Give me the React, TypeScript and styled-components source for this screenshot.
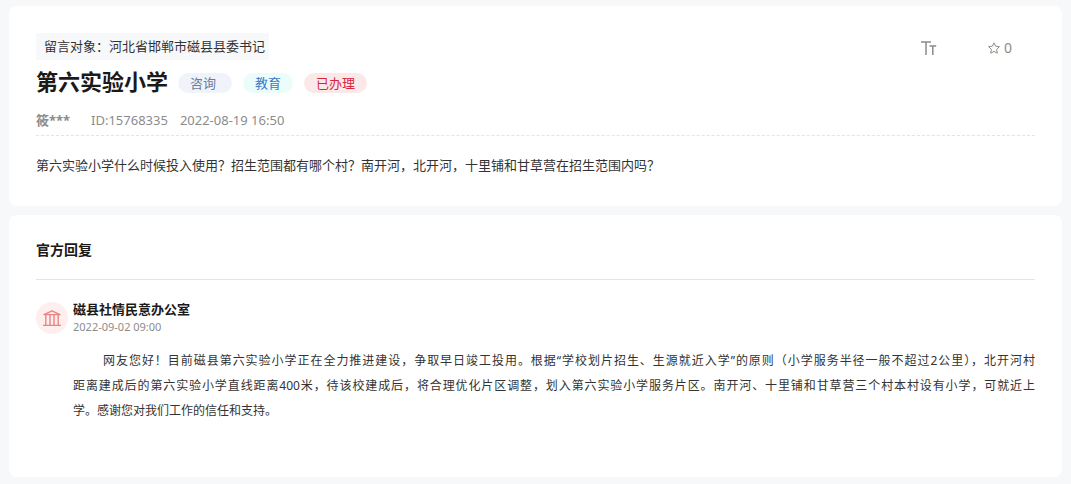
import React from "react";
import styled, { createGlobalStyle } from "styled-components";

const GlobalStyle = createGlobalStyle`
  * { box-sizing: border-box; }
  body {
    margin: 0;
    background: #f7f8fa;
    color: #333;
    font-family: "Noto Sans", "Noto Sans CJK SC", sans-serif;
    font-size: 13px;
  }
  h1, h2, h3, p { margin: 0; }
`;

const Page = styled.main`
  display: flex;
  flex-direction: column;
  gap: 9px;
  padding: 6px 9px 7px;
`;

const Card = styled.section<{ $bottom: number }>`
  padding: 27px 27px ${(p) => p.$bottom}px;
  border-radius: 8px;
  background: #fff;
`;

const Header = styled.header`
  display: flex;
  justify-content: space-between;
  align-items: flex-start;
  border-bottom: 1px dashed #e4e4e4;
`;

const Target = styled.div`
  width: fit-content;
  padding: 0 4px 1px 8px;
  border-radius: 2px;
  background: #f7f8fa;
  line-height: 26px;
`;

const TitleRow = styled.div`
  display: flex;
  align-items: center;
  gap: 10px;
  height: 45px;
`;

const Title = styled.h1`
  padding-bottom: 4px;
  color: #1a1a1a;
  font-size: 22px;
  line-height: 30px;
`;

const Tags = styled.div`
  display: flex;
  gap: 11px;
`;

const Tag = styled.span<{ $color: string; $bg: string; $end?: number }>`
  padding: 0 ${(p) => p.$end ?? 12}px 0 12px;
  border-radius: 10px;
  background: ${(p) => p.$bg};
  color: ${(p) => p.$color};
  line-height: 20px;
`;

const Meta = styled.div`
  display: flex;
  gap: 12px;
  color: #8c8c8c;
  line-height: 30px;
`;

const Author = styled.strong`
  min-width: 43px;
`;

const Actions = styled.div`
  display: flex;
  align-items: center;
  gap: 51px;
  height: 30px;
  padding-right: 23px;
`;

const Action = styled.button`
  display: flex;
  align-items: center;
  gap: 4px;
  padding: 0;
  border: 0;
  background: none;
  color: #8c8c8c;
  font: inherit;
  font-size: 14px;
  line-height: 20px;
  cursor: pointer;
`;

const Question = styled.p`
  margin-top: 17px;
  padding-bottom: 2px;
  line-height: 24px;
`;

const Heading = styled.h2`
  padding-bottom: 21px;
  border-bottom: 1px solid #e4e4e4;
  color: #1a1a1a;
  font-size: 14px;
  line-height: 16px;
`;

const Reply = styled.article`
  display: grid;
  grid-template-columns: 32px 1fr;
  column-gap: 5px;
  margin-top: 22px;
`;

const Avatar = styled.div`
  display: grid;
  place-items: center;
  width: 32px;
  height: 32px;
  border-radius: 50%;
  background: #ffeeee;
  color: #e88583;
`;

const Office = styled.h3`
  color: #1a1a1a;
  font-size: 13px;
  line-height: 14px;
`;

const ReplyTime = styled.time`
  display: block;
  color: #8c8c8c;
  font-size: 11px;
  line-height: 22px;
`;

const Answer = styled.p`
  margin-top: 10px;
  font-size: 12px;
  line-height: 25px;
`;

const Line = styled.span<{ $indent?: boolean; $full?: boolean }>`
  display: block;
  text-indent: ${(p) => (p.$indent ? 30 : 0)}px;
  text-align: justify;
  text-align-last: ${(p) => (p.$full ? "justify" : "left")};
`;

const TextSizeIcon = () => (
  <svg width="16" height="14" viewBox="0 0 16 14" fill="none" stroke="currentColor" aria-hidden="true">
    <path d="M0 1.1h10M5 1.1V14M8.4 5h6.8M11.8 5V14" strokeWidth="1.5" />
  </svg>
);

const StarIcon = () => (
  <svg width="12" height="12" viewBox="0 0 12 12" fill="none" stroke="currentColor" strokeLinejoin="round" aria-hidden="true">
    <path d="M6 .8l1.6 3.4 3.8.5-2.8 2.6.7 3.9L6 9.4l-3.3 1.8.7-3.9L.6 4.7l3.8-.5z" />
  </svg>
);

const HallIcon = () => (
  <svg width="18" height="17" viewBox="0 0 18 17" fill="none" stroke="currentColor" strokeLinejoin="round" aria-hidden="true">
    <path d="M1 4.6L9 .8l8 3.8zM0 15.4h18M2.8 5v10.4M7 5v10.4M11 5v10.4M15.2 5v10.4" strokeWidth="1.4" />
  </svg>
);

export default function App() {
  return (
    <>
      <GlobalStyle />
      <Page>
        <Card $bottom={27}>
          <Header>
            <div>
              <Target>留言对象：河北省邯郸市磁县县委书记</Target>
              <TitleRow>
                <Title>第六实验小学</Title>
                <Tags>
                  <Tag $color="#6b7c99" $bg="#f0f4fa" $end={16}>咨询</Tag>
                  <Tag $color="#3b76c8" $bg="#ebfdfa">教育</Tag>
                  <Tag $color="#d9263c" $bg="#fbe9ea">已办理</Tag>
                </Tags>
              </TitleRow>
              <Meta>
                <Author>筱***</Author>
                <span>ID:15768335</span>
                <time>2022-08-19 16:50</time>
              </Meta>
            </div>
            <Actions>
              <Action type="button" aria-label="字号"><TextSizeIcon /></Action>
              <Action type="button"><StarIcon />0</Action>
            </Actions>
          </Header>
          <Question>
            第六实验小学什么时候投入使用？招生范围都有哪个村？南开河，北开河，十里铺和甘草营在招生范围内吗？
          </Question>
        </Card>
        <Card $bottom={54}>
          <Heading>官方回复</Heading>
          <Reply>
            <Avatar><HallIcon /></Avatar>
            <div>
              <Office>磁县社情民意办公室</Office>
              <ReplyTime>2022-09-02 09:00</ReplyTime>
              <Answer>
                <Line $indent $full>
                  网友您好！目前磁县第六实验小学正在全力推进建设，争取早日竣工投用。根据“学校划片招生、生源就近入学”的原则（小学服务半径一般不超过2公里），北开河村
                </Line>
                <Line $full>
                  距离建成后的第六实验小学直线距离400米，待该校建成后，将合理优化片区调整，划入第六实验小学服务片区。南开河、十里铺和甘草营三个村本村设有小学，可就近上
                </Line>
                <Line>学。感谢您对我们工作的信任和支持。</Line>
              </Answer>
            </div>
          </Reply>
        </Card>
      </Page>
    </>
  );
}
